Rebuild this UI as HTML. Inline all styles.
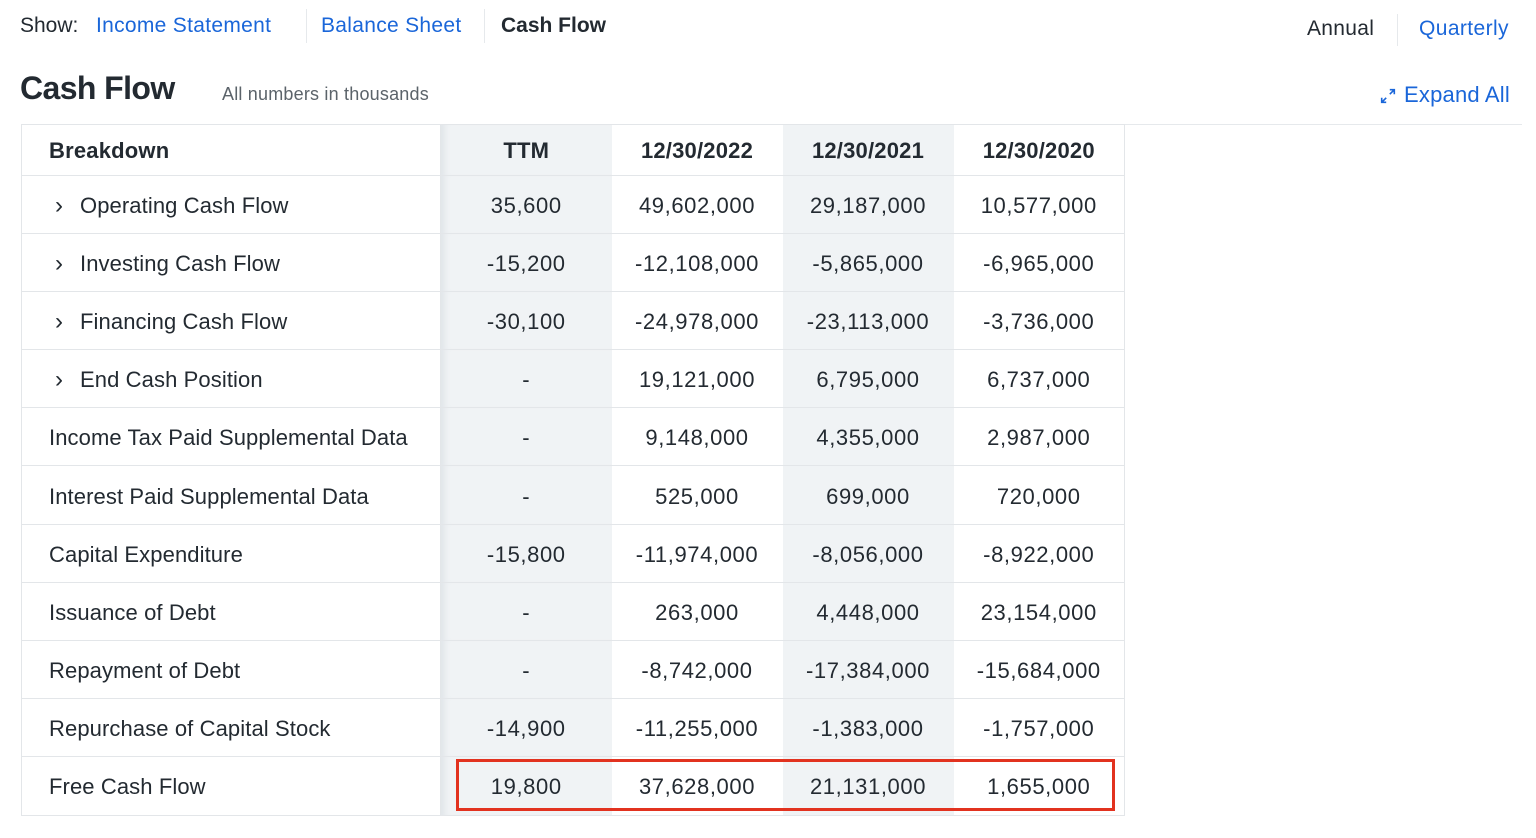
<!DOCTYPE html>
<html><head><meta charset="utf-8"><style>
*{margin:0;padding:0;box-sizing:border-box}
body{width:1536px;height:838px;background:#fff;font-family:"Liberation Sans",sans-serif;color:#232a31;position:relative;overflow:hidden}
.a{position:absolute;white-space:nowrap}
.blue{color:#1a66d9}
.sep{position:absolute;width:1px;background:#e6e9ec}
table{position:absolute;left:21px;top:125px;border-collapse:collapse;font-size:22px}
td{height:58.2px;border-bottom:1px solid #e3e6e9;text-align:center;width:171px;padding-top:3px;letter-spacing:0.6px}
tr.h td{height:50px;font-weight:bold;font-size:22px;letter-spacing:0.2px;padding-top:2px}
td.l{width:419px;text-align:left;padding-left:27px;border-right:1px solid #e3e6e9;border-left:1px solid #e3e6e9;letter-spacing:0.1px}
td.g{background:#f0f3f5}
td.t{box-shadow:inset 8px 0 6px -4px #e2e6ea}
td.last{border-right:1px solid #e3e6e9}
.ch{display:inline-block;width:31px;padding-left:6px;font-size:24px}
</style></head><body>
<div class="a" style="left:20px;top:14px;font-size:21px">Show:</div>
<div class="a blue" style="left:96px;top:14px;font-size:21px;letter-spacing:0.3px">Income Statement</div>
<div class="sep" style="left:306px;top:9px;height:34px"></div>
<div class="a blue" style="left:321px;top:14px;font-size:21px;letter-spacing:0.3px">Balance Sheet</div>
<div class="sep" style="left:484px;top:9px;height:34px"></div>
<div class="a" style="left:501px;top:14px;font-size:21px;font-weight:bold">Cash Flow</div>
<div class="a" style="left:1307px;top:17px;font-size:21px;letter-spacing:0.3px">Annual</div>
<div class="sep" style="left:1397px;top:14px;height:32px"></div>
<div class="a blue" style="left:1419px;top:17px;font-size:21px;letter-spacing:0.4px">Quarterly</div>
<div class="a" style="left:20px;top:70px;font-size:32px;font-weight:bold;letter-spacing:-0.6px">Cash Flow</div>
<div class="a" style="left:222px;top:84px;font-size:18px;color:#5b636a;letter-spacing:0.2px">All numbers in thousands</div>
<svg class="a" style="left:1379px;top:87px" width="18" height="18" viewBox="0 0 20 20" fill="none" stroke="#1a66d9" stroke-width="1.8"><path d="M3 17L8 12M12 8L17 3M12 3h5v5M3 12v5h5"/></svg>
<div class="a blue" style="left:1404px;top:82px;font-size:22px;letter-spacing:0.2px">Expand All</div>
<div class="a" style="left:1125px;top:124px;width:397px;height:1px;background:#e6e9ec"></div>
<div class="a" style="left:21px;top:124px;width:1104px;height:1px;background:#e3e6e9"></div>
<table>
<tr class="h"><td class="l">Breakdown</td><td class="g t">TTM</td><td>12/30/2022</td><td class="g">12/30/2021</td><td class="last">12/30/2020</td></tr>
<tr><td class="l"><span class="ch">›</span>Operating Cash Flow</td><td class="g t">35,600</td><td>49,602,000</td><td class="g">29,187,000</td><td class="last">10,577,000</td></tr>
<tr><td class="l"><span class="ch">›</span>Investing Cash Flow</td><td class="g t">-15,200</td><td>-12,108,000</td><td class="g">-5,865,000</td><td class="last">-6,965,000</td></tr>
<tr><td class="l"><span class="ch">›</span>Financing Cash Flow</td><td class="g t">-30,100</td><td>-24,978,000</td><td class="g">-23,113,000</td><td class="last">-3,736,000</td></tr>
<tr><td class="l"><span class="ch">›</span>End Cash Position</td><td class="g t">-</td><td>19,121,000</td><td class="g">6,795,000</td><td class="last">6,737,000</td></tr>
<tr><td class="l">Income Tax Paid Supplemental Data</td><td class="g t">-</td><td>9,148,000</td><td class="g">4,355,000</td><td class="last">2,987,000</td></tr>
<tr><td class="l">Interest Paid Supplemental Data</td><td class="g t">-</td><td>525,000</td><td class="g">699,000</td><td class="last">720,000</td></tr>
<tr><td class="l">Capital Expenditure</td><td class="g t">-15,800</td><td>-11,974,000</td><td class="g">-8,056,000</td><td class="last">-8,922,000</td></tr>
<tr><td class="l">Issuance of Debt</td><td class="g t">-</td><td>263,000</td><td class="g">4,448,000</td><td class="last">23,154,000</td></tr>
<tr><td class="l">Repayment of Debt</td><td class="g t">-</td><td>-8,742,000</td><td class="g">-17,384,000</td><td class="last">-15,684,000</td></tr>
<tr><td class="l">Repurchase of Capital Stock</td><td class="g t">-14,900</td><td>-11,255,000</td><td class="g">-1,383,000</td><td class="last">-1,757,000</td></tr>
<tr><td class="l">Free Cash Flow</td><td class="g t">19,800</td><td>37,628,000</td><td class="g">21,131,000</td><td class="last">1,655,000</td></tr>
</table>
<div class="a" style="left:456px;top:759px;width:659px;height:52px;border:3px solid #e2321f"></div>
</body></html>
